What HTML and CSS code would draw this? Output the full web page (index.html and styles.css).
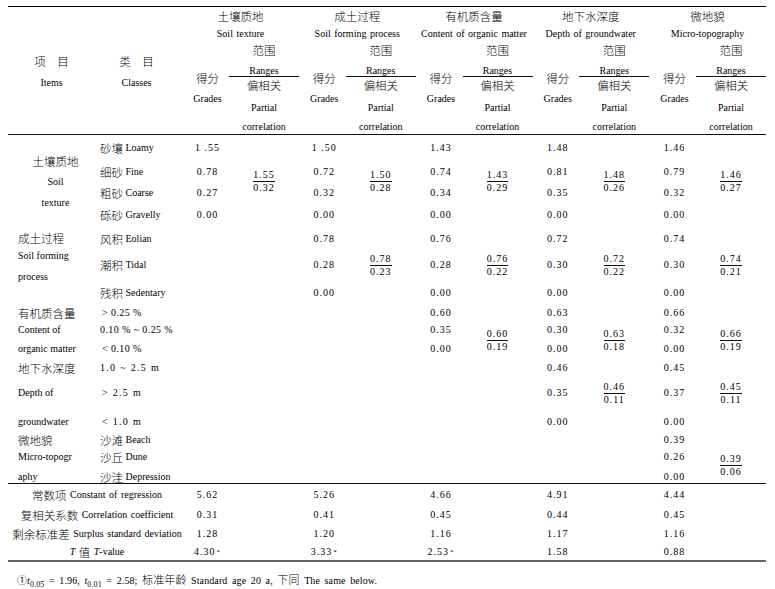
FILE: index.html
```html
<!DOCTYPE html>
<html lang="zh">
<head>
<meta charset="utf-8">
<title>Table</title>
<link rel="stylesheet" href="styles.css">
</head>
<body>
<div class="page">
  <div class="table">
    <div class="grid thead">
      <div class="h-item">
        <div class="hl1 zh">项　目</div>
        <div class="hl2">Items</div>
      </div>
      <div class="h-class">
        <div class="hl1 zh">类　目</div>
        <div class="hl2">Classes</div>
      </div>

      <div class="h-group hg1">
        <div class="h-title zh">土壤质地</div>
        <div class="h-en">Soil texture</div>
        <div class="h-sub">
          <div class="h-grade"><div class="zh hg-zh">得分</div><div class="hg-en">Grades</div></div>
          <div class="h-range"><div class="zh hr-fw">范围</div><div class="hr-rg">Ranges</div><div class="zh hr-pc">偏相关</div><div class="hr-p">Partial</div><div class="hr-c">correlation</div></div>
        </div>
      </div>
      <div class="h-group hg2">
        <div class="h-title zh">成土过程</div>
        <div class="h-en">Soil forming process</div>
        <div class="h-sub">
          <div class="h-grade"><div class="zh hg-zh">得分</div><div class="hg-en">Grades</div></div>
          <div class="h-range"><div class="zh hr-fw">范围</div><div class="hr-rg">Ranges</div><div class="zh hr-pc">偏相关</div><div class="hr-p">Partial</div><div class="hr-c">correlation</div></div>
        </div>
      </div>
      <div class="h-group hg3">
        <div class="h-title zh">有机质含量</div>
        <div class="h-en">Content of organic matter</div>
        <div class="h-sub">
          <div class="h-grade"><div class="zh hg-zh">得分</div><div class="hg-en">Grades</div></div>
          <div class="h-range"><div class="zh hr-fw">范围</div><div class="hr-rg">Ranges</div><div class="zh hr-pc">偏相关</div><div class="hr-p">Partial</div><div class="hr-c">correlation</div></div>
        </div>
      </div>
      <div class="h-group hg4">
        <div class="h-title zh">地下水深度</div>
        <div class="h-en">Depth of groundwater</div>
        <div class="h-sub">
          <div class="h-grade"><div class="zh hg-zh">得分</div><div class="hg-en">Grades</div></div>
          <div class="h-range"><div class="zh hr-fw">范围</div><div class="hr-rg">Ranges</div><div class="zh hr-pc">偏相关</div><div class="hr-p">Partial</div><div class="hr-c">correlation</div></div>
        </div>
      </div>
      <div class="h-group hg5">
        <div class="h-title zh">微地貌</div>
        <div class="h-en">Micro-topography</div>
        <div class="h-sub">
          <div class="h-grade"><div class="zh hg-zh">得分</div><div class="hg-en">Grades</div></div>
          <div class="h-range"><div class="zh hr-fw">范围</div><div class="hr-rg">Ranges</div><div class="zh hr-pc">偏相关</div><div class="hr-p">Partial</div><div class="hr-c">correlation</div></div>
        </div>
      </div>
    </div>

    <div class="grid tbody">
      <div class="ci s1-4 item-soil">
        <div class="is1 zh">土壤质地</div>
        <div class="is2">Soil</div>
        <div class="is3">texture</div>
      </div>
      <div class="ci s5-7 item-form">
        <div class="if1 zh">成土过程</div>
        <div class="if2">Soil forming</div>
        <div class="if3">process</div>
      </div>
      <div class="cell ci r8"><span class="zh">有机质含量</span></div>
      <div class="cell ci r9">Content of</div>
      <div class="cell ci r10">organic matter</div>
      <div class="cell ci r11"><span class="zh">地下水深度</span></div>
      <div class="cell ci r12">Depth of</div>
      <div class="cell ci r13">groundwater</div>
      <div class="cell ci r14"><span class="zh">微地貌</span></div>
      <div class="cell ci r15">Micro-topogr</div>
      <div class="cell ci r16 last">aphy</div>

      <div class="cell cc r1"><span class="zh">砂壤</span>&nbsp;Loamy</div>
      <div class="cell cc r2"><span class="zh">细砂</span>&nbsp;Fine</div>
      <div class="cell cc r3"><span class="zh">粗砂</span>&nbsp;Coarse</div>
      <div class="cell cc r4"><span class="zh">砾砂</span>&nbsp;Gravelly</div>
      <div class="cell cc r5"><span class="zh">风积</span>&nbsp;Eolian</div>
      <div class="cell cc r6"><span class="zh">潮积</span>&nbsp;Tidal</div>
      <div class="cell cc r7"><span class="zh">残积</span>&nbsp;Sedentary</div>
      <div class="cell cc r8 pad2 num">&gt; 0.25 %</div>
      <div class="cell cc r9 num">0.10 % ~ 0.25 %</div>
      <div class="cell cc r10 pad2 num">&lt; 0.10 %</div>
      <div class="cell cc r11 num wide">1.0 ~ 2.5 m</div>
      <div class="cell cc r12 pad2 num wide">&gt; 2.5 m</div>
      <div class="cell cc r13 pad2 num wide">&lt; 1.0 m</div>
      <div class="cell cc r14"><span class="zh">沙滩</span>&nbsp;Beach</div>
      <div class="cell cc r15"><span class="zh">沙丘</span>&nbsp;Dune</div>
      <div class="cell cc r16 last"><span class="zh">沙洼</span>&nbsp;Depression</div>

      <div class="cell v g1 r1">1 .55</div>
      <div class="cell v g1 r2">0.78</div>
      <div class="cell v g1 r3">0.27</div>
      <div class="cell v g1 r4">0.00</div>

      <div class="cell v g2 r1">1 .50</div>
      <div class="cell v g2 r2">0.72</div>
      <div class="cell v g2 r3">0.32</div>
      <div class="cell v g2 r4">0.00</div>
      <div class="cell v g2 r5">0.78</div>
      <div class="cell v g2 r6">0.28</div>
      <div class="cell v g2 r7">0.00</div>

      <div class="cell v g3 r1">1.43</div>
      <div class="cell v g3 r2">0.74</div>
      <div class="cell v g3 r3">0.34</div>
      <div class="cell v g3 r4">0.00</div>
      <div class="cell v g3 r5">0.76</div>
      <div class="cell v g3 r6">0.28</div>
      <div class="cell v g3 r7">0.00</div>
      <div class="cell v g3 r8">0.60</div>
      <div class="cell v g3 r9">0.35</div>
      <div class="cell v g3 r10">0.00</div>

      <div class="cell v g4 r1">1.48</div>
      <div class="cell v g4 r2">0.81</div>
      <div class="cell v g4 r3">0.35</div>
      <div class="cell v g4 r4">0.00</div>
      <div class="cell v g4 r5">0.72</div>
      <div class="cell v g4 r6">0.30</div>
      <div class="cell v g4 r7">0.00</div>
      <div class="cell v g4 r8">0.63</div>
      <div class="cell v g4 r9">0.30</div>
      <div class="cell v g4 r10">0.00</div>
      <div class="cell v g4 r11">0.46</div>
      <div class="cell v g4 r12">0.35</div>
      <div class="cell v g4 r13">0.00</div>

      <div class="cell v g5 r1">1.46</div>
      <div class="cell v g5 r2">0.79</div>
      <div class="cell v g5 r3">0.32</div>
      <div class="cell v g5 r4">0.00</div>
      <div class="cell v g5 r5">0.74</div>
      <div class="cell v g5 r6">0.30</div>
      <div class="cell v g5 r7">0.00</div>
      <div class="cell v g5 r8">0.66</div>
      <div class="cell v g5 r9">0.32</div>
      <div class="cell v g5 r10">0.00</div>
      <div class="cell v g5 r11">0.45</div>
      <div class="cell v g5 r12">0.37</div>
      <div class="cell v g5 r13">0.00</div>
      <div class="cell v g5 r14">0.39</div>
      <div class="cell v g5 r15">0.26</div>
      <div class="cell v g5 r16 last">0.00</div>

      <div class="cell f q1 s2-3"><span class="frac"><span class="n">1.55</span><span class="d">0.32</span></span></div>
      <div class="cell f q2 s2-3"><span class="frac"><span class="n">1.50</span><span class="d">0.28</span></span></div>
      <div class="cell f q3 s2-3"><span class="frac"><span class="n">1.43</span><span class="d">0.29</span></span></div>
      <div class="cell f q4 s2-3"><span class="frac"><span class="n">1.48</span><span class="d">0.26</span></span></div>
      <div class="cell f q5 s2-3"><span class="frac"><span class="n">1.46</span><span class="d">0.27</span></span></div>

      <div class="cell f q2 r6"><span class="frac"><span class="n">0.78</span><span class="d">0.23</span></span></div>
      <div class="cell f q3 r6"><span class="frac"><span class="n">0.76</span><span class="d">0.22</span></span></div>
      <div class="cell f q4 r6"><span class="frac"><span class="n">0.72</span><span class="d">0.22</span></span></div>
      <div class="cell f q5 r6"><span class="frac"><span class="n">0.74</span><span class="d">0.21</span></span></div>

      <div class="cell f q3 s9-10"><span class="frac"><span class="n">0.60</span><span class="d">0.19</span></span></div>
      <div class="cell f q4 s9-10"><span class="frac"><span class="n">0.63</span><span class="d">0.18</span></span></div>
      <div class="cell f q5 s9-10"><span class="frac"><span class="n">0.66</span><span class="d">0.19</span></span></div>

      <div class="cell f q4 r12"><span class="frac"><span class="n">0.46</span><span class="d">0.11</span></span></div>
      <div class="cell f q5 r12"><span class="frac"><span class="n">0.45</span><span class="d">0.11</span></span></div>

      <div class="cell f q5 s15-16"><span class="frac"><span class="n">0.39</span><span class="d">0.06</span></span></div>
    </div>

    <div class="grid tsum">
      <div class="cell lab r1"><span class="zh">常数项</span>&nbsp;Constant of regression</div>
      <div class="cell lab r2"><span class="zh">复相关系数</span>&nbsp;Correlation coefficient</div>
      <div class="cell lab r3"><span class="zh">剩余标准差</span>&nbsp;Surplus standard deviation</div>
      <div class="cell lab r4"><i>T</i>&nbsp;<span class="zh">值</span>&nbsp;<i>T</i>-value</div>

      <div class="cell v g1 r1">5.62</div>
      <div class="cell v g2 r1">5.26</div>
      <div class="cell v g3 r1">4.66</div>
      <div class="cell v g4 r1">4.91</div>
      <div class="cell v g5 r1">4.44</div>

      <div class="cell v g1 r2">0.31</div>
      <div class="cell v g2 r2">0.41</div>
      <div class="cell v g3 r2">0.45</div>
      <div class="cell v g4 r2">0.44</div>
      <div class="cell v g5 r2">0.45</div>

      <div class="cell v g1 r3">1.28</div>
      <div class="cell v g2 r3">1.20</div>
      <div class="cell v g3 r3">1.16</div>
      <div class="cell v g4 r3">1.17</div>
      <div class="cell v g5 r3">1.16</div>

      <div class="cell v g1 r4">4.30<sup class="star">*</sup></div>
      <div class="cell v g2 r4">3.33<sup class="star">*</sup></div>
      <div class="cell v g3 r4">2.53<sup class="star">*</sup></div>
      <div class="cell v g4 r4">1.58</div>
      <div class="cell v g5 r4">0.88</div>
    </div>
  </div>

  <p class="note">①<i>t</i><sub>0.05</sub> = 1.96, <i>t</i><sub>0.01</sub> = 2.58; <span class="zh">标准年龄</span> Standard age 20 a, <span class="zh">下同</span> The same below.</p>
</div>
</body>
</html>
```

FILE: styles.css
```css
* { box-sizing: border-box; }

body {
  margin: 0;
  background: #fff;
  color: #000;
  font-family: "Liberation Serif", "Noto Sans CJK SC", serif;
  font-size: 10px;
}

.page {
  padding: 6px 0 0 8px;
}

.zh {
  font-family: "Noto Sans CJK SC", sans-serif;
  font-size: 11.5px;
  font-weight: 300;
}

.table {
  width: 758px;
  border-top: 1px solid #000;
}

.grid {
  display: grid;
  grid-template-columns: 87px 91px 43px 70px 3.75px 43px 70px 3.75px 43px 70px 3.75px 43px 70px 3.75px 43px 70px;
}

/* header */
.thead {
  height: 128px;
  grid-template-rows: 127px;
  border-bottom: 1px solid #111;
}

.h-item, .h-class {
  padding-top: 47px;
  text-align: center;
}
.h-item { grid-column: 1; }
.h-class { grid-column: 2; padding-right: 6px; margin-left: -2px; }

.hl1 { line-height: 14px; }
.hl2 { line-height: 14px; margin-top: 8px; }

.h-group {
  display: flex;
  flex-direction: column;
  text-align: center;
  white-space: nowrap;
}
.hg1 { grid-column: 3 / 5; }
.hg2 { grid-column: 6 / 8; }
.hg3 { grid-column: 9 / 11; }
.hg4 { grid-column: 12 / 14; }
.hg5 { grid-column: 15 / 17; }

.h-title { line-height: 18px; padding-right: 4px; }
.h-en { line-height: 18px; padding-right: 4px; word-spacing: 1px; }

.h-sub {
  display: grid;
  grid-template-columns: 43px 70px;
}

.h-grade { padding-top: 28px; }
.hg-zh { line-height: 14px; }
.hg-en { line-height: 14px; margin-top: 7px; }

.hr-fw { line-height: 14px; }
.hr-rg { line-height: 11px; margin-top: 8px; border-bottom: 1px solid #111; }
.hr-pc { line-height: 16px; }
.hr-p { line-height: 21px; margin-top: 4px; }
.hr-c { line-height: 18px; }

/* body */
.tbody {
  grid-template-rows: 26px 22px 19px 26px 21px 32px 24px 16px 18px 20px 17px 34px 23px 14px 20px 16px;
  border-bottom: 1px solid #111;
}

.cell {
  display: flex;
  align-items: center;
  white-space: nowrap;
  line-height: 12px;
}
.cell.last {
  align-items: flex-end;
}

.ci { grid-column: 1; padding-left: 10px; }
.cc { grid-column: 2; padding-left: 5px; }
.cc.pad2 { padding-left: 7px; }
.num { letter-spacing: 0.4px; }
.num.wide { letter-spacing: 1.3px; }

.item-soil {
  text-align: center;
  padding-top: 16px;
  padding-right: 2px;
}
.is1 { line-height: 20px; }
.is2 { line-height: 22px; }
.is3 { line-height: 20px; }

.item-form { padding-left: 10px; white-space: nowrap; }
.if1 { line-height: 20px; }
.if2 { line-height: 16px; }
.if3 { line-height: 26px; }

.v {
  justify-content: center;
  letter-spacing: 1px;
}
.f { justify-content: center; }

.g1 { grid-column: 3; }
.g2 { grid-column: 6; }
.g3 { grid-column: 9; }
.g4 { grid-column: 12; }
.g5 { grid-column: 15; }
.q1 { grid-column: 4; }
.q2 { grid-column: 7; }
.q3 { grid-column: 10; }
.q4 { grid-column: 13; }
.q5 { grid-column: 16; }

.r1 { grid-row: 1; }
.r2 { grid-row: 2; }
.r3 { grid-row: 3; }
.r4 { grid-row: 4; }
.r5 { grid-row: 5; }
.r6 { grid-row: 6; }
.r7 { grid-row: 7; }
.r8 { grid-row: 8; }
.r9 { grid-row: 9; }
.r10 { grid-row: 10; }
.r11 { grid-row: 11; }
.r12 { grid-row: 12; }
.r13 { grid-row: 13; }
.r14 { grid-row: 14; }
.r15 { grid-row: 15; }
.r16 { grid-row: 16; }
.s1-4 { grid-row: 1 / 5; }
.s5-7 { grid-row: 5 / 8; }
.s2-3 { grid-row: 2 / 4; }
.s9-10 { grid-row: 9 / 11; }
.s15-16 { grid-row: 15 / 17; }

.frac {
  display: inline-flex;
  flex-direction: column;
  align-items: center;
  letter-spacing: 1px;
}
.frac .n {
  line-height: 12px;
  border-bottom: 1px solid #111;
}
.frac .d {
  line-height: 12px;
}

/* summary */
.tsum {
  grid-template-rows: 21px 19px 19px 17px;
  border-bottom: 2px solid #666;
}
.lab {
  grid-column: 1 / 3;
  justify-content: center;
  word-spacing: 1px;
}
.star {
  font-size: 7px;
  line-height: 0;
  vertical-align: 4px;
  margin-left: 1px;
}

/* note */
.note {
  margin: 9px 0 0;
  padding-left: 9px;
  line-height: 16px;
  word-spacing: 2px;
  letter-spacing: 0.1px;
}
.note sub {
  font-size: 8px;
  line-height: 0;
}
.note .zh { font-size: 11px; }
```
